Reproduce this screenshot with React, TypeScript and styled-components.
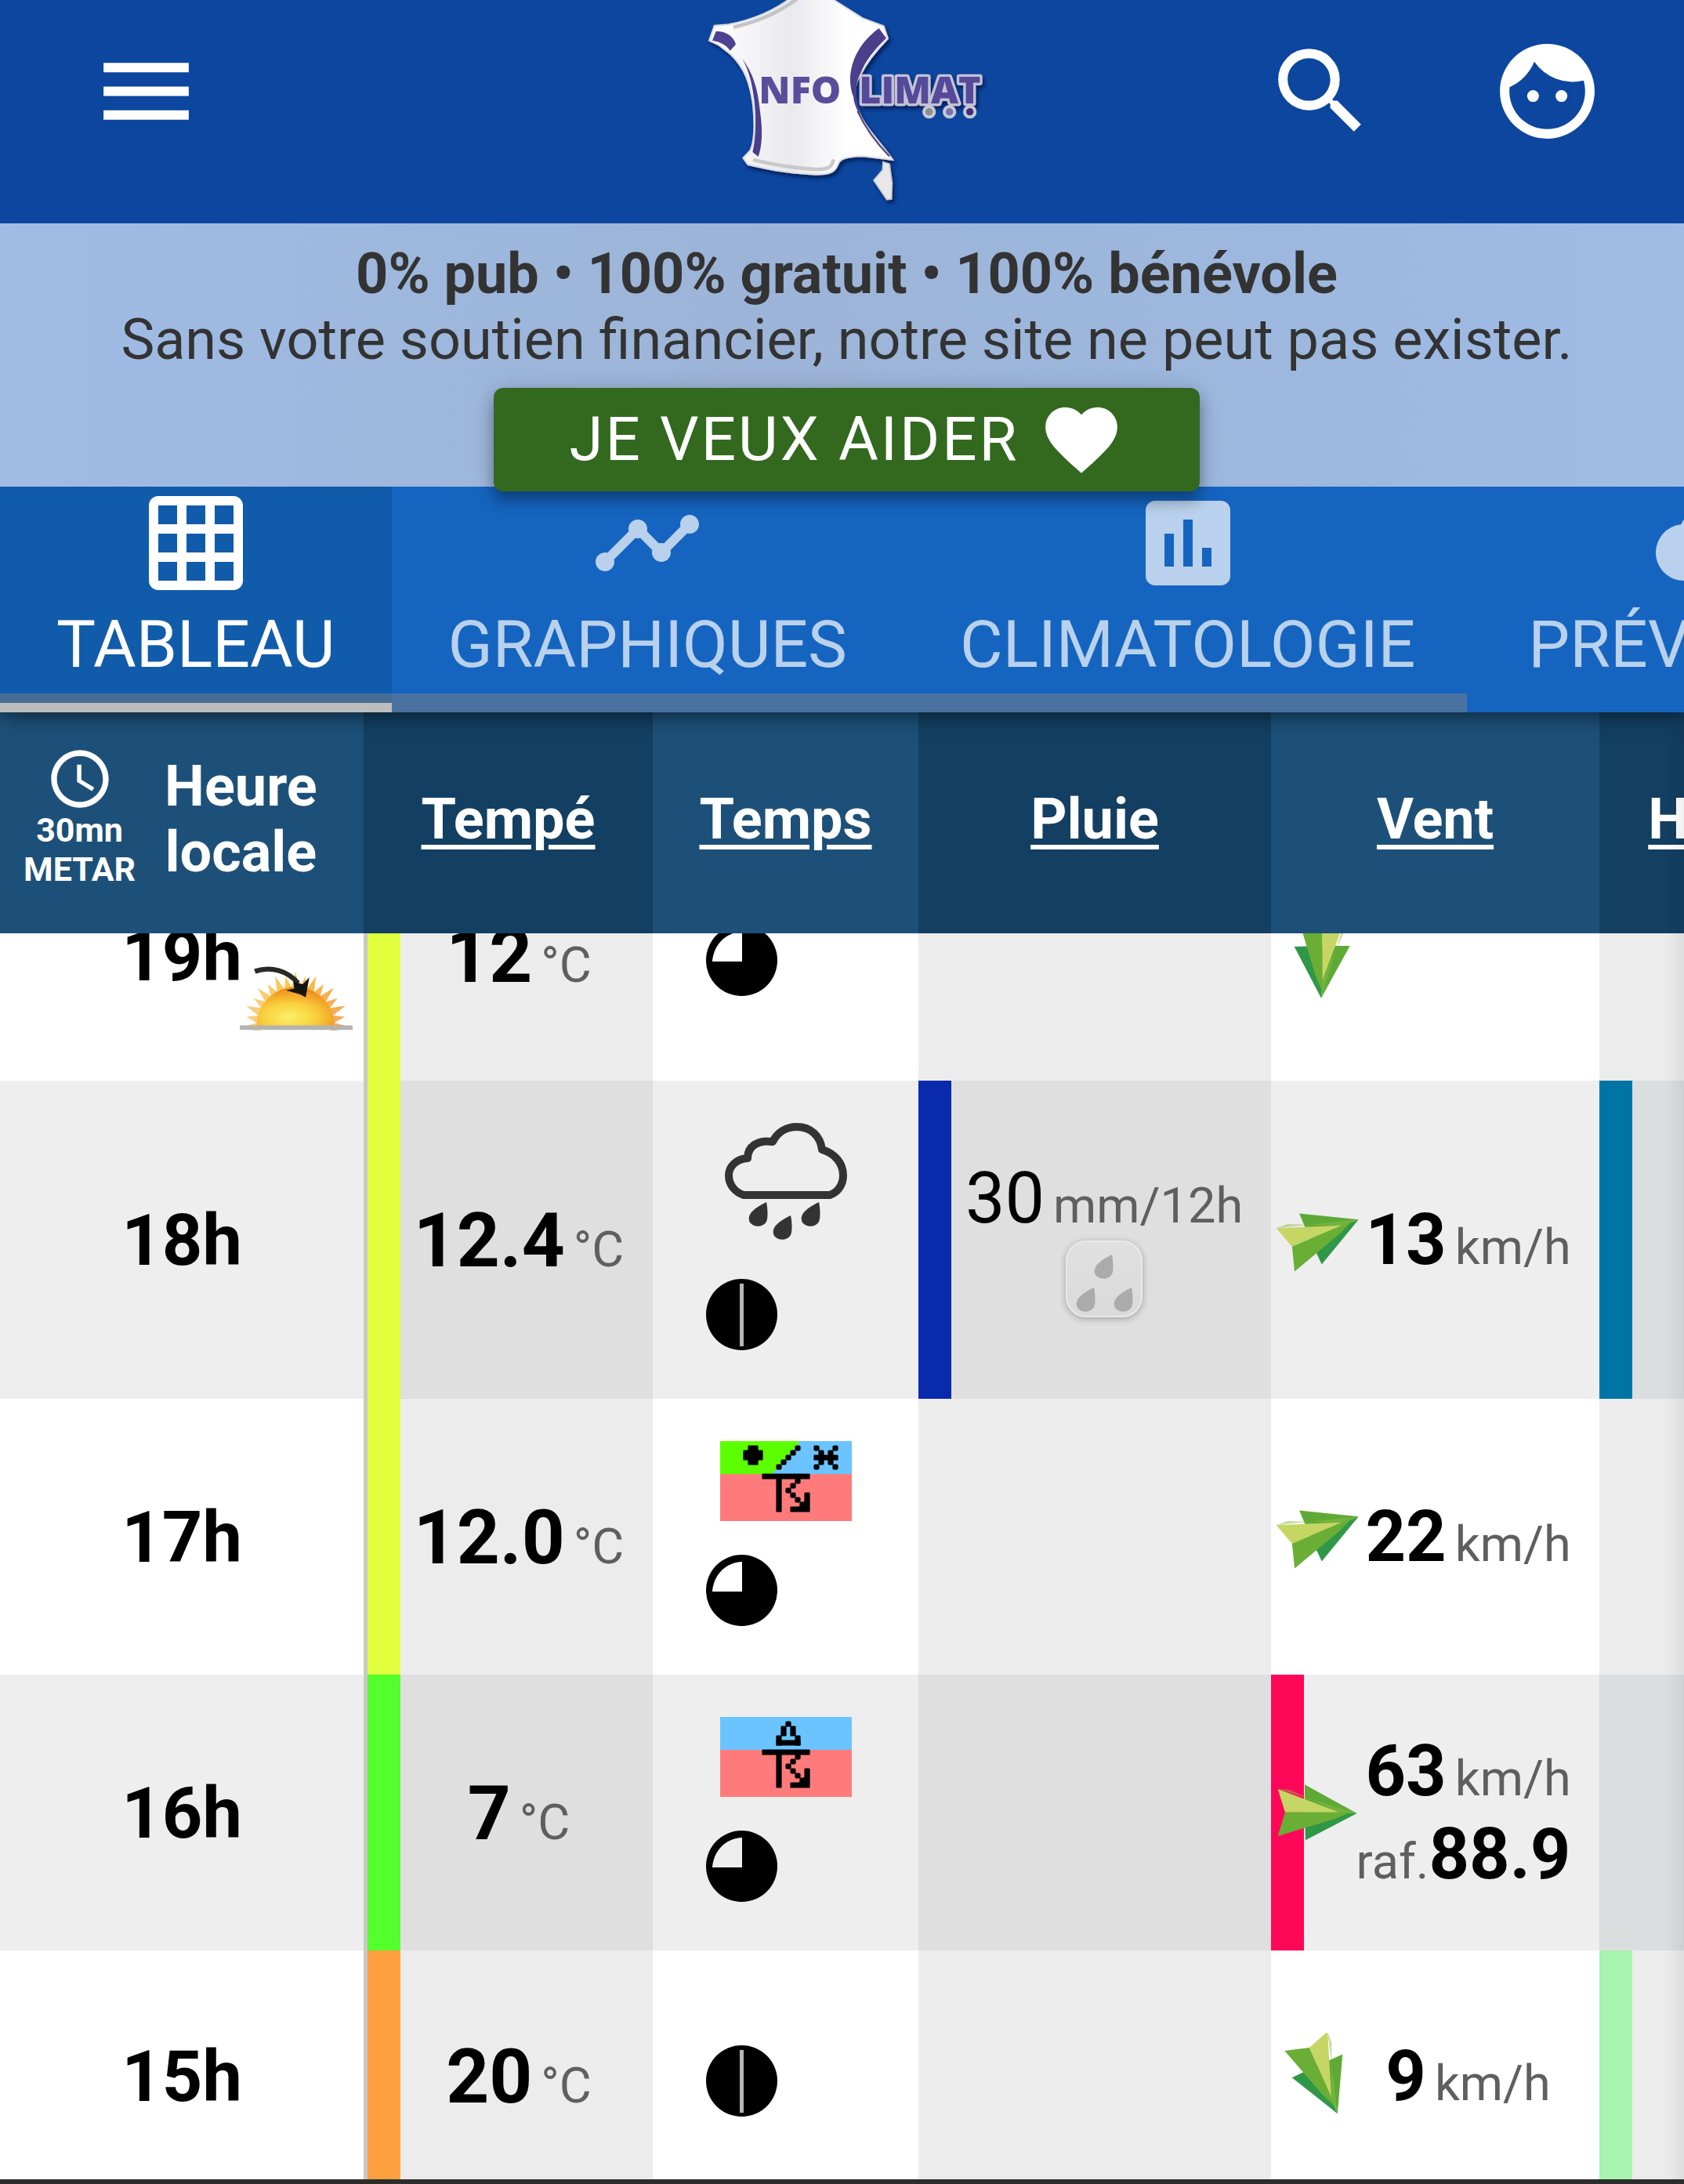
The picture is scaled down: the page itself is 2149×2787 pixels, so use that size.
import React from "react";
import styled, { createGlobalStyle } from "styled-components";
import {
  MdCloud,
  MdFace,
  MdFavorite,
  MdGridOn,
  MdMenu,
  MdInsertChart,
  MdSearch,
  MdTimeline,
} from "react-icons/md";

const GlobalStyle = createGlobalStyle`
  * { box-sizing: border-box; }
  body {
    margin: 0;
    background: #fff;
    font-family: Roboto, "Liberation Sans", sans-serif;
    color: #000;
  }
  button { font: inherit; border: 0; padding: 0; background: none; cursor: pointer; }
  svg { display: block; flex: none; }
`;

const Page = styled.div`
  display: flex;
  flex-direction: column;
  height: 100vh;
  overflow: hidden;
`;

/* ---------- top bar ---------- */

const TopBar = styled.header`
  display: grid;
  grid-template-columns: 1fr auto 1fr;
  height: 285px;
  flex: none;
  padding: 0 102px 0 114px;
  background: #0c469f;
  color: #fff;
`;

const BarGroup = styled.div<{ $end?: boolean }>`
  display: flex;
  align-items: flex-start;
  justify-content: ${(p) => (p.$end ? "flex-end" : "flex-start")};
  gap: 144px;
  padding-top: 44px;
`;

const IconButton = styled.button`
  color: #fff;
`;

const LogoLink = styled.a`
  display: block;
`;

/* ---------- donation banner ---------- */

const Banner = styled.section`
  position: relative;
  z-index: 3;
  flex: none;
  display: flex;
  flex-direction: column;
  align-items: center;
  height: 336px;
  padding: 23px 0 0 12px;
  background: linear-gradient(90deg, #a0bce5 0%, #9cb4d7 45%, #9db7dd 70%, #a0bce5 100%);
  color: #333;
  font-size: 72px;
  line-height: 84px;
  white-space: nowrap;
`;

const BannerLine = styled.p<{ $strong?: boolean }>`
  margin: 0;
  font-weight: ${(p) => (p.$strong ? 700 : 400)};
`;

const HelpButton = styled.button`
  && {
    display: flex;
    align-items: center;
    flex: none;
    gap: 24px;
    height: 132px;
    margin-top: 19px;
    padding: 0 96px;
    border-radius: 12px;
    background: #33691e;
    color: #fff;
    font-size: 78px;
    letter-spacing: 3px;
    box-shadow: 0 12px 18px rgba(0, 0, 0, 0.3), 0 2px 30px rgba(0, 0, 0, 0.15);
  }
`;

/* ---------- tabs ---------- */

const TabBar = styled.nav`
  position: relative;
  z-index: 2;
  flex: none;
  display: flex;
  height: 288px;
  background: #1565c0;
  box-shadow: 0 4px 24px rgba(0, 0, 0, 0.55);
`;

const Tab = styled.a<{ $active?: boolean }>`
  position: relative;
  flex: none;
  display: flex;
  flex-direction: column;
  align-items: center;
  gap: 16px;
  padding: 0 72px;
  background: ${(p) => (p.$active ? "#115bab" : "transparent")};
  color: ${(p) => (p.$active ? "#fff" : "#b9d1ec")};
  font-size: 84px;
  line-height: 84px;
  text-decoration: none;
  white-space: nowrap;

  &::after {
    content: "";
    position: absolute;
    z-index: 1;
    left: 0;
    right: 0;
    bottom: 0;
    height: 12px;
    background: ${(p) => (p.$active ? "#bdbdbd" : "transparent")};
  }
`;

const TabScrollThumb = styled.div`
  position: absolute;
  left: 0;
  bottom: 0;
  width: 87.1%;
  height: 24px;
  background: rgba(128, 128, 128, 0.5);
`;

/* ---------- observations ---------- */

const TableArea = styled.main`
  position: relative;
  flex: 1;
  min-height: 0;
  overflow: hidden;

  &::after {
    content: "";
    position: absolute;
    z-index: 2;
    top: 0;
    right: 0;
    bottom: 0;
    width: 24px;
    background: linear-gradient(270deg, rgba(0, 0, 0, 0.06), transparent);
  }
`;

const Table = styled.table`
  display: block;
`;

const rowGrid = `
  display: grid;
  grid-template-columns: 464px 369px 339px 450px 419px 420px;
`;

const Head = styled.thead`
  display: block;
  position: sticky;
  top: 0;
  z-index: 1;
`;

const HeadRow = styled.tr`
  ${rowGrid}
  height: 282px;
`;

const HeadCell = styled.th`
  display: flex;
  align-items: center;
  justify-content: center;
  padding: 0 0 8px;
  background: #1d5079;
  color: #fff;
  font-size: 72px;
  line-height: 84px;

  &:nth-child(even) { background: #133f62; }
  &:first-child { justify-content: flex-start; gap: 37px; padding-left: 30px; }
`;

const HeadLink = styled.a`
  color: inherit;
  text-decoration: underline;
  text-decoration-thickness: 6px;
  text-underline-offset: 8px;
`;

const Period = styled.span`
  display: flex;
  flex-direction: column;
  align-items: center;
  padding-bottom: 8px;
  font-size: 43px;
  line-height: 50px;

  svg { margin-bottom: -4px; }
`;

/* The list is scrolled down so that its first row is partly under the header. */
const Body = styled.tbody`
  display: block;
  margin-top: -132px;
`;

const Row = styled.tr`
  ${rowGrid}
  min-height: 320px;
  background: #fff;

  &:nth-child(even) { background: #eee; }
`;

const Cell = styled.td<{ $bar?: string }>`
  display: flex;
  flex-direction: column;
  align-items: center;
  justify-content: center;
  padding: 0;
  line-height: 106px;
  white-space: nowrap;
  box-shadow: ${(p) => (p.$bar ? `inset 42px 0 ${p.$bar}` : "none")};

  &:nth-child(even) { background-color: #ececec; }
  ${Row}:nth-child(even) &:nth-child(even) { background-color: #dfdfdf; }
  ${Row}:nth-child(even) &:last-child { background-color: #dadedf; }
`;

const HourCell = styled.th`
  position: relative;
  display: flex;
  align-items: center;
  justify-content: center;
  padding: 4px 0 0;
  font-size: 90px;
  line-height: 106px;
`;

const SunBadge = styled.span`
  position: absolute;
  right: 14px;
  bottom: 64px;
`;

const TempCell = styled(Cell)`
  padding: 2px 20px 0 42px;
  border-left: 5px solid #c8c8c8;
`;

const RainCell = styled(Cell)`
  padding: 2px 18px 0 42px;
`;

const SkyCell = styled(Cell)`
  padding: 54px 0;
`;

const WindCell = styled(Cell)`
  display: grid;
  grid-template-columns: 112px minmax(0, 1fr);
  padding: 2px 32px 0 4px;
`;

const WindText = styled.div`
  display: flex;
  flex-direction: column;
  align-items: center;
  justify-self: center;
`;

const Reading = styled.span`
  display: flex;
  align-items: baseline;
`;

const GustReading = styled(Reading)`
  margin-right: 12px;
`;

const Value = styled.span<{ $size?: number; $light?: boolean }>`
  font-size: ${(p) => p.$size ?? 90}px;
  font-weight: ${(p) => (p.$light ? 400 : 700)};
`;

const Unit = styled.span<{ $gap?: number }>`
  margin-left: ${(p) => p.$gap ?? 11}px;
  color: #5f5f5f;
  font-size: 63px;
  line-height: 84px;
`;

const WeatherIcon = styled.span`
  margin-bottom: 23px;
`;

const Cover = styled.span`
  margin: 20px 112px 8px 0;
`;

const DropsBox = styled.span`
  width: 98px;
  height: 98px;
  margin-bottom: 8px;
  border: 2px solid #e9e9e9;
  border-radius: 26px;
  background: linear-gradient(#e0e0e0, #dadada);
  box-shadow: 0 2px 8px rgba(0, 0, 0, 0.28);
`;

const BottomEdge = styled.footer`
  flex: none;
  height: 6px;
  background: #2d2d2d;
`;

/* ---------- drawings ---------- */

function Logo() {
  return (
    <svg width="440" height="280" viewBox="0 0 1320 840" role="img" aria-label="Infoclimat">
      <defs>
        <linearGradient id="paper" x1="0" x2="1">
          <stop offset="0" stopColor="#fff" />
          <stop offset=".45" stopColor="#e9e9ee" />
          <stop offset=".75" stopColor="#fff" />
        </linearGradient>
        <filter id="soft" x="-10%" y="-10%" width="120%" height="125%">
          <feDropShadow dx="8" dy="12" stdDeviation="6" floodColor="#021c50" floodOpacity=".8" />
        </filter>
      </defs>
      <g filter="url(#soft)">
        <path
          d="M450 -12C370 50 290 78 205 94L152 98L132 155L168 172L214 208C270 262 288 320 300 400C308 480 305 540 290 575L262 605L280 630C350 645 430 665 540 668C600 668 615 655 624 632C630 606 660 600 720 598L835 612C800 560 740 500 715 450C685 390 680 330 712 285C740 230 775 190 816 148L800 100L720 70L590 -12Z"
          fill="url(#paper)"
          stroke="#dcdce2"
          strokeWidth="6"
        />
        <path d="M798 620L822 628L832 700L830 762L812 764L762 690L796 650Z" fill="#e8e8ea" stroke="#c9c9d0" strokeWidth="5" />
      </g>
      <path d="M470 -5C390 52 320 82 225 104" fill="none" stroke="#c4c4c6" strokeWidth="14" />
      <path d="M300 612C370 628 450 645 540 648C590 648 602 640 608 610" fill="none" stroke="#c9c9c9" strokeWidth="14" />
      <path d="M158 120C190 118 225 135 234 170L212 194C195 168 170 160 144 155Z" fill="#4f4290" />
      <path d="M782 108C690 175 650 280 684 370C688 405 700 425 714 446C692 380 688 320 712 280C730 230 770 185 810 146Z" fill="#4b3f8c" />
      <path d="M258 224C300 280 318 340 326 420C338 500 335 560 320 600L298 582C312 530 312 440 304 380C296 320 285 270 258 224Z" fill="#4b3f8c" />
      <path d="M700 425C730 490 770 545 822 598" fill="none" stroke="#5a4b7c" strokeWidth="7" />
      <g fontFamily="'Open Sans', 'Liberation Sans', sans-serif" fontWeight="800" fontSize="145">
        <text x="322" y="397" fill="#5a4d9b">NFO</text>
        <g filter="url(#soft)">
          <text x="706" y="397" fill="#54489a" stroke="#c3c1d6" strokeWidth="20" strokeLinejoin="round" paintOrder="stroke">
            LIMAT
          </text>
        </g>
      </g>
      {["#8c8f90", "#7b74a8", "#3f2f7c"].map((c, i) => (
        <circle key={c} cx={974 + i * 78} cy="428" r="20" fill={c} stroke="#c9c8d8" strokeWidth="12" />
      ))}
    </svg>
  );
}

function Clock() {
  return (
    <svg width="88" height="88" viewBox="0 0 24 24" fill="#fff" aria-hidden="true">
      <path d="M12 2C6.500 2 2 6.500 2 12s4.500 10 10 10 10-4.500 10-10S17.500 2 12 2zm0 18c-4.400 0-8-3.600-8-8s3.600-8 8-8 8 3.600 8 8-3.600 8-8 8zM12.500 7H11v6l5.200 3.200.8-1.200-4.500-2.700z" />
    </svg>
  );
}

function Sunset() {
  const cx = 245;
  const cy = 286;
  const point = (r: number, t: number) => `${cx + r * Math.cos(t)} ${cy - r * Math.sin(t) * 1.02}`;
  const spikes = Array.from({ length: 17 }, (_, i) => {
    const a = (Math.PI * i) / 16;
    return `M${point(136, a - 0.14)}L${point(i % 2 === 0 ? 208 : 194, a)}L${point(136, a + 0.14)}Z`;
  }).join("");
  return (
    <svg width="144" height="86" viewBox="30 40 435 260" role="img" aria-label="Coucher du soleil">
      <defs>
        <linearGradient id="rays" x1="0" x2="1">
          <stop offset="0" stopColor="#fbd08a" />
          <stop offset=".5" stopColor="#fac44e" />
          <stop offset="1" stopColor="#f6a25a" />
        </linearGradient>
        <radialGradient id="sun" cx=".42" cy=".75" r=".7">
          <stop offset="0" stopColor="#faf06a" />
          <stop offset=".5" stopColor="#f9cf3c" />
          <stop offset="1" stopColor="#ef8c1b" />
        </radialGradient>
      </defs>
      <path d={spikes} fill="url(#rays)" />
      <path d="M95 286A150 154 0 0 1 395 286Z" fill="url(#sun)" />
      <path d="M30 280H465V298H30Z" fill="#b3b3b0" />
      <path d="M88 72C150 50 215 70 255 118" fill="none" stroke="#2a2a26" strokeWidth="19" />
      <path d="M208 145L240 138L236 110L272 122L298 95L284 172L262 160Z" fill="#15150f" />
    </svg>
  );
}

const DROP = "M24 0C26 10 26 20 24 25C20 32 8 33 3 26C-2 16 8 8 24 0Z";

function RainCloud() {
  return (
    <svg width="156" height="156" viewBox="0 0 156 156" role="img" aria-label="Pluie">
      <path
        d="M24 92C12 88 5 78 5 67C5 56 14 46 29 45C29 30 42 21 61 24C67 12 78 5 92 5C110 5 122 17 124 34C141 39 151 52 151 67C151 80 143 89 134 92Z"
        fill="none"
        stroke="#333"
        strokeWidth="10"
        strokeLinejoin="round"
      />
      <g fill="#333">
        <path d={DROP} transform="translate(29 101)" />
        <path d={DROP} transform="translate(60 118)" />
        <path d={DROP} transform="translate(96 101)" />
      </g>
    </svg>
  );
}

function Drops() {
  return (
    <DropsBox>
      <svg width="94" height="94" viewBox="2 2 94 94" fill="#ababab" role="img" aria-label="Cumul de pluie">
        <path d={DROP} transform="translate(35 18)" />
        <path d={DROP} transform="translate(12 60)" />
        <path d={DROP} transform="translate(60 60)" />
      </svg>
    </DropsBox>
  );
}

/* METAR pictograms: runs of [column, row, width, height] on a 28 by 17 grid. */
type Run = [number, number, number, number];

const STORM: Run[] = [
  [9, 7, 10, 1], [12, 8, 1, 7], [16, 8, 1, 1], [15, 9, 1, 1], [14, 10, 1, 1], [15, 11, 1, 1],
  [16, 12, 1, 1], [17, 13, 1, 1], [18, 11, 1, 3], [15, 14, 4, 1],
];
const RAIN_OR_SNOW: Run[] = [
  [6, 1, 2, 4], [5, 2, 4, 2],
  [16, 1, 1, 1], [15, 2, 1, 1], [14, 3, 1, 1], [13, 4, 1, 1], [12, 5, 1, 1],
  [20, 1, 1, 1], [24, 1, 1, 1], [21, 2, 1, 1], [23, 2, 1, 1], [20, 3, 5, 1],
  [21, 4, 1, 1], [23, 4, 1, 1], [20, 5, 1, 1], [24, 5, 1, 1],
];
const HAIL: Run[] = [
  [14, 1, 1, 1], [13, 2, 1, 2], [15, 2, 1, 2], [12, 4, 1, 2], [16, 4, 1, 2], [12, 5, 5, 1],
];

function Metar({ kind }: { kind: "mixed" | "hail" }) {
  const runs = [...STORM, ...(kind === "mixed" ? RAIN_OR_SNOW : HAIL)];
  return (
    <svg width="168" height="102" viewBox="0 0 28 17" role="img" aria-label={kind === "mixed" ? "Orage, pluie ou neige" : "Orage, grésil"}>
      <path d="M0 0H28V7H0Z" fill="#6bc4ff" />
      {kind === "mixed" && <path d="M0 0H17L11 7H0Z" fill="#5cff00" />}
      <path d="M0 7H28V17H0Z" fill="#ff7b7b" />
      <path d="M16.500 14.200L18.200 12.500V14.200Z" />
      {runs.map(([x, y, w, h], i) => (
        <rect key={i} x={x} y={y} width={w} height={h} rx={w === 1 && h === 1 ? 0.2 : 0.1} stroke="#000" strokeWidth="0.2" />
      ))}
    </svg>
  );
}

function SkyCover({ eighths }: { eighths: 6 | 7 }) {
  return (
    <svg width="91" height="91" viewBox="0 0 91 91" role="img" aria-label={`Nébulosité ${eighths}/8`}>
      {eighths === 6 ? (
        <path
          fillRule="evenodd"
          d="M45.500 0A45.500 45.500 0 1 1 45.500 91A45.500 45.500 0 1 1 45.500 0ZM46 9C24 10 10 26 8 47H46Z"
        />
      ) : (
        <>
          <circle cx="45.500" cy="45.500" r="45.500" />
          <path d="M45.500 6V86" stroke="#b5b5b5" strokeWidth="5" />
        </>
      )}
    </svg>
  );
}

/* Each heading is its own drawing of the dart: a rotation and where its centre lies. */
const HEADINGS = {
  E: { angle: 0, cx: 0, cy: 0 },
  ENE: { angle: -23, cx: 18, cy: -22 },
  SSE: { angle: 66, cx: 14, cy: 6 },
  S: { angle: 90, cx: 12, cy: 12 },
};

function WindArrow({ heading }: { heading: keyof typeof HEADINGS }) {
  const { angle, cx, cy } = HEADINGS[heading];
  return (
    <svg width="112" height="112" viewBox="0 0 336 336" role="img" aria-label={`Vent vers ${heading}`}>
      <g transform={`translate(${cx} ${cy}) rotate(${angle} 168 168)`}>
        <path d="M117 58L317 168L117 166Z" fill="#5faa36" />
        <path d="M117 166L317 168L120 271Z" fill="#2f9848" />
        <path d="M14 75L250 164L42 164Z" fill="#c6d664" />
        <path d="M14 75L317 168L250 166L60 78Z" fill="#8abb45" opacity=".5" />
        <path d="M42 164H290L230 190L14 255Z" fill="#6aae35" />
      </g>
    </svg>
  );
}

/* ---------- data ---------- */

type Observation = {
  hour: string;
  sunset?: boolean;
  temp: string;
  tempColor: string;
  weather?: React.ReactNode;
  cover: 6 | 7;
  rain?: string;
  heading: keyof typeof HEADINGS;
  wind?: string;
  gust?: string;
  windColor?: string;
  humidityColor?: string;
};

const observations: Observation[] = [
  { hour: "19h", sunset: true, temp: "12", tempColor: "#e2ff3d", cover: 6, heading: "S" },
  { hour: "18h", temp: "12.4", tempColor: "#e2ff3d", weather: <RainCloud />, cover: 7, rain: "30", heading: "ENE", wind: "13", humidityColor: "#0075a5" },
  { hour: "17h", temp: "12.0", tempColor: "#e2ff3d", weather: <Metar kind="mixed" />, cover: 6, heading: "ENE", wind: "22" },
  { hour: "16h", temp: "7", tempColor: "#53ff2d", weather: <Metar kind="hail" />, cover: 6, heading: "E", wind: "63", gust: "88.9", windColor: "#ff0759" },
  { hour: "15h", temp: "20", tempColor: "#ffa040", cover: 7, heading: "SSE", wind: "9", humidityColor: "#a7f3b0" },
];

const tabs = [
  { label: "TABLEAU", Icon: MdGridOn },
  { label: "GRAPHIQUES", Icon: MdTimeline },
  { label: "CLIMATOLOGIE", Icon: MdInsertChart },
  { label: "PRÉVISIONS", Icon: MdCloud },
];

function ObservationRow({ o }: { o: Observation }) {
  return (
    <Row>
      <HourCell scope="row">
        {o.hour}
        {o.sunset && <SunBadge><Sunset /></SunBadge>}
      </HourCell>
      <TempCell $bar={o.tempColor}>
        <Reading>
          <Value $size={96}>{o.temp}</Value>
          <Unit>°C</Unit>
        </Reading>
      </TempCell>
      <SkyCell>
        {o.weather && <WeatherIcon>{o.weather}</WeatherIcon>}
        <Cover><SkyCover eighths={o.cover} /></Cover>
      </SkyCell>
      <RainCell $bar={o.rain ? "#0a2aad" : undefined}>
        {o.rain && (
          <>
            <Reading>
              <Value $light>{o.rain}</Value>
              <Unit>mm/12h</Unit>
            </Reading>
            <Drops />
          </>
        )}
      </RainCell>
      <WindCell $bar={o.windColor}>
        <WindArrow heading={o.heading} />
        <WindText>
          {o.wind && (
            <Reading>
              <Value>{o.wind}</Value>
              <Unit>km/h</Unit>
            </Reading>
          )}
          {o.gust && (
            <GustReading>
              <Unit $gap={0}>raf.</Unit>
              <Value>{o.gust}</Value>
            </GustReading>
          )}
        </WindText>
      </WindCell>
      <Cell $bar={o.humidityColor} />
    </Row>
  );
}

export default function App() {
  return (
    <Page>
      <GlobalStyle />
      <TopBar>
        <BarGroup>
          <IconButton aria-label="Menu"><MdMenu size={145} /></IconButton>
        </BarGroup>
        <LogoLink href="#accueil"><Logo /></LogoLink>
        <BarGroup $end>
          <IconButton aria-label="Rechercher"><MdSearch size={145} /></IconButton>
          <IconButton aria-label="Mon compte"><MdFace size={145} /></IconButton>
        </BarGroup>
      </TopBar>

      <Banner>
        <BannerLine $strong>0% pub • 100% gratuit • 100% bénévole</BannerLine>
        <BannerLine>Sans votre soutien financier, notre site ne peut pas exister.</BannerLine>
        <HelpButton>
          JE VEUX AIDER
          <MdFavorite size={110} />
        </HelpButton>
      </Banner>

      <TabBar>
        {tabs.map(({ label, Icon }, i) => (
          <Tab key={label} href={`#${label.toLowerCase()}`} $active={i === 0}>
            <Icon size={144} />
            {label}
          </Tab>
        ))}
        <TabScrollThumb />
      </TabBar>

      <TableArea>
        <Table>
          <Head>
            <HeadRow>
              <HeadCell scope="col">
                <Period>
                  <Clock />
                  <span>30mn</span>
                  <span>METAR</span>
                </Period>
                <span>Heure<br />locale</span>
              </HeadCell>
              {["Tempé", "Temps", "Pluie", "Vent", "Humidité"].map((name) => (
                <HeadCell key={name} scope="col"><HeadLink href="#tri">{name}</HeadLink></HeadCell>
              ))}
            </HeadRow>
          </Head>
          <Body>
            {observations.map((o) => <ObservationRow key={o.hour} o={o} />)}
          </Body>
        </Table>
      </TableArea>
      <BottomEdge />
    </Page>
  );
}
